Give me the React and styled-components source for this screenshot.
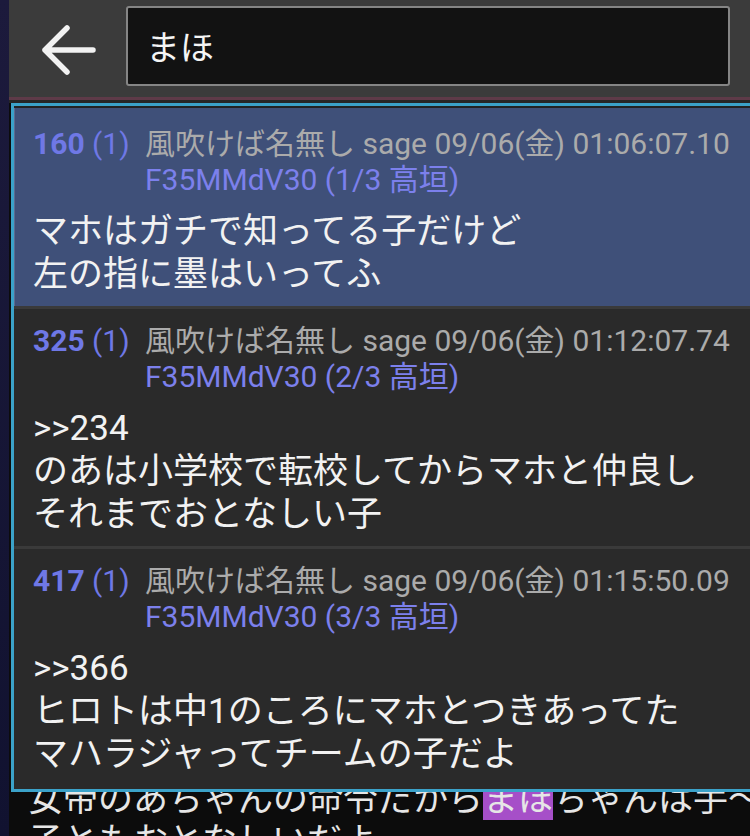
import React from "react"
import styled, { createGlobalStyle } from "styled-components"

const GlobalStyle = createGlobalStyle`
  html, body {
    margin: 0;
    padding: 0;
    background: #16163a;
    overflow: hidden;
  }
  body {
    font-family: Roboto, "Noto Sans CJK JP", sans-serif;
  }
`

const posts = [
  {
    no: "160",
    count: "(1)",
    name: "風吹けば名無し",
    mail: "sage",
    date: "09/06(金) 01:06:07.10",
    id: "F35MMdV30 (1/3 高垣)",
    lines: ["マホはガチで知ってる子だけど", "左の指に墨はいってふ"],
    selected: true,
  },
  {
    no: "325",
    count: "(1)",
    name: "風吹けば名無し",
    mail: "sage",
    date: "09/06(金) 01:12:07.74",
    id: "F35MMdV30 (2/3 高垣)",
    anchor: ">>234",
    lines: ["のあは小学校で転校してからマホと仲良し", "それまでおとなしい子"],
  },
  {
    no: "417",
    count: "(1)",
    name: "風吹けば名無し",
    mail: "sage",
    date: "09/06(金) 01:15:50.09",
    id: "F35MMdV30 (3/3 高垣)",
    anchor: ">>366",
    lines: ["ヒロトは中1のころにマホとつきあってた", "マハラジャってチームの子だよ"],
  },
]

export default function App() {
  return (
    <>
      <GlobalStyle />
      <Screen>
        <EdgeStrip />
        <Main>
          <Toolbar>
            <BackButton aria-label="back">
              <svg width="58" height="50" viewBox="0 0 58 50" fill="none">
                <path
                  d="M54 25H6M28 3L6 25l22 22"
                  stroke="#f2f2f2"
                  strokeWidth="5.5"
                  strokeLinecap="round"
                  strokeLinejoin="round"
                />
              </svg>
            </BackButton>
            <SearchBox>まほ</SearchBox>
          </Toolbar>
          <ToolbarEdge />
          <Content>
            <Popup>
              {posts.map((p) => (
                <Post key={p.no} $selected={p.selected}>
                  <Header>
                    <Num>
                      <b>{p.no}</b> {p.count}
                    </Num>
                    <Meta>
                      <div>
                        {p.name} {p.mail} {p.date}
                      </div>
                      <Id>{p.id}</Id>
                    </Meta>
                  </Header>
                  <Body>
                    {p.anchor && <div>{p.anchor}</div>}
                    {p.lines.map((l) => (
                      <div key={l}>{l}</div>
                    ))}
                  </Body>
                </Post>
              ))}
            </Popup>
            <Thread>
              <div>
                女帝のあちゃんの命令だから<Hit>まほ</Hit>ちゃんは手〜
              </div>
              <div>子ともおとなしいだよ</div>
            </Thread>
          </Content>
        </Main>
      </Screen>
    </>
  )
}

const Screen = styled.div`
  display: flex;
  width: 750px;
  height: 836px;
  overflow: hidden;
`

const EdgeStrip = styled.div`
  width: 9px;
  flex: none;
  background: linear-gradient(#1c1a3c, #111230);
`

const Main = styled.div`
  flex: 1;
  display: flex;
  flex-direction: column;
  background: #0c0c0c;
  min-width: 0;
`

const Toolbar = styled.div`
  height: 97px;
  flex: none;
  display: flex;
  align-items: center;
  background: #3b3b3b;
  padding: 0 20px 0 0;
  box-sizing: border-box;
`

const ToolbarEdge = styled.div`
  height: 3px;
  background: #5e3a48;
  border-bottom: 3px solid #262626;
`

const BackButton = styled.div`
  width: 117px;
  display: flex;
  justify-content: center;
  padding-top: 2px;
`

const SearchBox = styled.div`
  flex: 1;
  height: 80px;
  margin-top: -6px;
  box-sizing: border-box;
  border: 2px solid #858585;
  border-radius: 3px;
  background: #121212;
  color: #f4f4f4;
  font-size: 34px;
  display: flex;
  align-items: center;
  padding-left: 18px;
`

const Content = styled.div`
  flex: 1;
  display: flex;
  flex-direction: column;
  min-height: 0;
`

const Popup = styled.div`
  position: relative;
  z-index: 1;
  margin: 0 -4px -13px 2px;
  border: 3px solid #3ba2c9;
  background: #232323;
  padding-top: 2px;
`

const Post = styled.div`
  background: ${(p) => (p.$selected ? "#3f5079" : "#2a2a2a")};
  padding: 14px 8px 10px 19px;
  & + & {
    border-top: 3px solid #3a3a3a;
  }
  &:first-child {
    padding-top: 18px;
    box-shadow: inset 1px 0 0 #5d6b90;
  }
  &:last-child {
    padding-bottom: 13px;
  }
`

const Header = styled.div`
  display: grid;
  grid-template-columns: 112px 1fr;
  font-size: 30px;
  line-height: 36px;
  white-space: nowrap;
`

const Num = styled.div`
  color: #6f78e6;
  b {
    font-weight: 700;
  }
`

const Meta = styled.div`
  color: #ababab;
`

const Id = styled.div`
  color: #7c80ec;
`

const Body = styled.div`
  margin-top: 12px;
  color: #f2f2f2;
  font-size: 35px;
  line-height: 43px;
  white-space: nowrap;
`

const Thread = styled.div`
  padding-left: 19px;
  color: #e6e6e6;
  font-size: 35px;
  line-height: 42px;
  white-space: nowrap;
`

const Hit = styled.span`
  background: #a64fc8;
`
